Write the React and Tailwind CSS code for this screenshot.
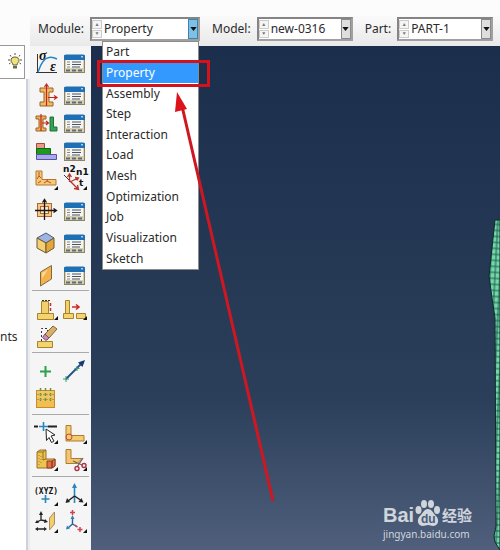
import React, { useState } from 'react';

const MODULES = [
    'Part',
    'Property',
    'Assembly',
    'Step',
    'Interaction',
    'Load',
    'Mesh',
    'Optimization',
    'Job',
    'Visualization',
    'Sketch',
];

/* ---------- Toolbox icons ---------- */

const Icon = ({ children, more }) => (
    <svg viewBox="0 0 28 28" className="w-7 h-7 overflow-visible" fill="none" aria-hidden="true">
        {children}
        {more && <path d="M26 20v4h-4z" fill="#111" />}
    </svg>
);

const ManagerIcon = () => (
    <Icon>
        <rect x="3.5" y="5.5" width="20" height="17" fill="#d9cfae" stroke="#8c8468" />
        <path d="M3 10V6.500Q3 4.500 5 4.500H22Q24 4.500 24 6.500V10z" fill="#1f6fb5" />
        <rect x="20" y="6" width="2" height="1.500" fill="#9fd0f2" />
        <rect x="5" y="10" width="17" height="8" fill="#f4f5f5" />
        <path d="M6 12h3M6 14.500h3M6 17h3" stroke="#888" />
        <path d="M11 12h9M11 14.500h9M11 17h8" stroke="#4d5460" />
        <path d="M5 19.500h4v2H5zM11 19.500h4v2h-4zM17 19.500h4v2h-4z" fill="#5d6a7c" />
    </Icon>
);

const MaterialIcon = () => (
    <Icon>
        <path d="M5.500 4v19M4 22.500h21" stroke="#333" />
        <path d="M6 22C9 13 12 8 17 7.500 20 7 22 7.500 25 9" stroke="#2387c2" strokeWidth="1.500" />
        <text x="7" y="10" fill="#111" fontSize="14" fontStyle="italic" fontWeight="bold" fontFamily="Liberation Serif, serif">σ</text>
        <text x="18" y="21" fill="#111" fontSize="14" fontStyle="italic" fontWeight="bold" fontFamily="Liberation Serif, serif">ε</text>
    </Icon>
);

const SectionIcon = () => (
    <Icon>
        <path d="M8 6h13v4h-4v10h4v4H8v-4h4V10H8z" fill="#f0b968" stroke="#9a6425" />
        <path d="M14.500 24V3M12.500 5l2-3 2 3M16 15.500h8M22 13.500l3 2-3 2" stroke="#c8231c" strokeWidth="1.200" />
    </Icon>
);

const AssignIcon = () => (
    <Icon>
        <path d="M4 6h10v3h-3v9h3v3H4v-3h3V9H4z" fill="#eeb05c" stroke="#9a6425" />
        <path d="M9 4v17M10 13h6M14 11l2.500 2-2.500 2" stroke="#c8231c" strokeWidth="1.200" />
        <path d="M18 7h3.500v10H25v4h-7z" fill="#35a152" stroke="#1f7438" />
    </Icon>
);

const LayupIcon = () => (
    <Icon>
        <path d="M4.500 5.500h8v5h-8z" fill="#e89b8b" stroke="#a04a3a" />
        <path d="M4.500 10.500h14v6h-14z" fill="#1d9a1d" stroke="#11680f" />
        <path d="M4.500 16.500h20v5h-20z" fill="#a9a8e8" stroke="#5654a8" />
    </Icon>
);

const OrientationIcon = () => (
    <Icon more>
        <path d="M4 5h6v8.500h14V19H4z" fill="#f5c977" stroke="#ae7a2c" />
        <path d="M7 6v4l-2 3M7 10l2 2M12 17l3-2 4 2M15 15l1-2M6 17l3-2" stroke="#c64a24" />
    </Icon>
);

const NormalsIcon = () => (
    <Icon more>
        <g fill="#111" fontSize="9" fontWeight="bold" fontFamily="DejaVu Sans, sans-serif">
            <text x="2" y="6">n2</text>
            <text x="15" y="9">n1</text>
            <text x="18" y="20">t</text>
        </g>
        <path d="M3 9l7 7" stroke="#333" />
        <path d="M8.500 16V9M6.500 11l2-3 2 3M9 16l8-4M14 11.500l3.500.500-1.500 2.500M9 15l8 8M16.500 19l1 4.500-4.500-1" stroke="#b8342c" strokeWidth="1.300" />
    </Icon>
);

const FrameIcon = () => (
    <Icon>
        <rect x="5.500" y="5.500" width="14" height="13" fill="#f5c98d" stroke="#b0672c" />
        <rect x="8.500" y="8.500" width="8" height="7" fill="#f9ead2" stroke="#b0672c" />
        <path d="M12.500 22V2M10.500 4.500l2-3 2 3M3 12.500h21M21.500 10.500l3 2-3 2" stroke="#181818" strokeWidth="1.300" />
    </Icon>
);

const SkinIcon = () => (
    <Icon>
        <path d="M5 8l9-5 8 5-8 5z" fill="#9db5e2" stroke="#4d5a78" />
        <path d="M5 8l9 5v10l-9-5z" fill="#f6cf73" stroke="#6d5a30" />
        <path d="M22 8l-8 5v10l8-5z" fill="#e2a63c" stroke="#6d5a30" />
    </Icon>
);

const ShellIcon = () => (
    <Icon>
        <path d="M8.500 10l11-6.500V17l-11 7z" fill="#f3b24a" stroke="#7c6a48" />
        <path d="M10 11l6-3.500-6 9z" fill="#fbd999" />
    </Icon>
);

const StringerIcon = () => (
    <Icon more>
        <path d="M9.500 5.500h7v12h-7z" fill="#f3cf6b" stroke="#a98328" />
        <path d="M5.500 17.500h16v6h-16z" fill="#f5d46f" stroke="#a98328" />
        <path d="M10 4.500h9" stroke="#333" strokeDasharray="2 1" />
        <path d="M18.500 7v9" stroke="#cb2d24" strokeWidth="1.500" strokeDasharray="3 2" />
    </Icon>
);

const OffsetIcon = () => (
    <Icon more>
        <path d="M4.500 4.500h4v13h-4z" fill="#f3cf6b" stroke="#a98328" />
        <path d="M2.500 17.500h10v5h-10zM15.500 17.500h9v5h-9z" fill="#f5d46f" stroke="#a98328" />
        <path d="M11 11h6M15 8.500l3 2.500-3 2.500" stroke="#cb2d24" strokeWidth="1.600" />
    </Icon>
);

const EraseIcon = () => (
    <Icon>
        <path d="M5.500 18.500h15v6h-15z" fill="#f5d46f" stroke="#a98328" />
        <path d="M9.500 18V5.500h6V17" stroke="#333" strokeDasharray="2 2" />
        <path d="M13 11l8-8 4 3-8 9z" fill="#d8b069" stroke="#7f6537" />
        <path d="M13 11l4 4-3 2.500-3.500-3z" fill="#c98bb3" stroke="#7b4f74" />
    </Icon>
);

const PointIcon = () => (
    <Icon>
        <path d="M13.500 8v11M8 13.500h11" stroke="#2aa14a" strokeWidth="2" />
    </Icon>
);

const AxisIcon = () => (
    <Icon>
        <path d="M5 21L22 4" stroke="#214f86" strokeWidth="1.800" />
        <path d="M24 2l-2.500 7-4.500-4.500z" fill="#173c74" />
        <path d="M5 18v6M2 21h6M16 8v5M13.500 10.500h5" stroke="#3b9a6f" />
    </Icon>
);

const GridIcon = () => (
    <Icon>
        <rect x="4.500" y="5.500" width="18" height="17" fill="#f3bd4f" stroke="#c28d2c" />
        <path d="M5 6h17v10H5z" fill="#efc766" />
        <path d="M8.500 3v14M13.500 3v14M18.500 3v14" stroke="#6c9138" strokeWidth="1.500" strokeDasharray="3 2" />
        <path d="M5 9.500h17M5 14.500h17" stroke="#b49a40" strokeDasharray="2 1" />
    </Icon>
);

const PartitionEdgeIcon = () => (
    <Icon more>
        <path d="M2 6.500h4M16 6.500h9" stroke="#222" strokeWidth="1.800" />
        <path d="M11.500 2v9M7 6.500h9" stroke="#2786bd" strokeWidth="1.600" />
        <path d="M14 9l9 6-4 1 3 5-2.500 1.500-2.500-5-2.500 3z" fill="#fff" stroke="#222" />
    </Icon>
);

const PartitionFaceIcon = () => (
    <Icon more>
        <path d="M5 5.500h5v10h13v5.500H5z" fill="#f5cc72" stroke="#b07c2c" />
        <circle cx="8" cy="17" r="3" stroke="#c5492a" />
    </Icon>
);

const PartitionCellIcon = () => (
    <Icon more>
        <path d="M5 5l3-2h6v9h9v7l-3 2H5z" fill="#eec34f" stroke="#947027" />
        <path d="M5 5h6l3-2M11 5v8M11 13l3-1" stroke="#947027" />
        <path d="M15 14h5v7h-5zM20 14l3-2v7l-3 2z" fill="#dd7548" stroke="#983920" />
        <path d="M7 8v10M9 9v9" stroke="#a88129" strokeDasharray="1 2" />
    </Icon>
);

const CutIcon = () => (
    <Icon more>
        <path d="M5 2.500h5v9h11l-5 5H5z" fill="#f3c570" stroke="#b07c2c" />
        <path d="M12 14l9 4M22 11l-6 9" stroke="#666" strokeWidth="1.300" />
        <circle cx="23" cy="18.500" r="2" stroke="#b52f3e" strokeWidth="1.400" />
        <circle cx="16" cy="21.500" r="2" stroke="#b52f3e" strokeWidth="1.400" />
    </Icon>
);

const DatumPointIcon = () => (
    <Icon more>
        <text x="2" y="12" fill="#111" fontSize="8" fontWeight="bold" fontFamily="DejaVu Sans Mono, monospace">(XYZ)</text>
        <path d="M13.500 13v8M9.500 17h8" stroke="#2786bd" strokeWidth="1.600" />
    </Icon>
);

const TriadIcon = () => (
    <Icon more>
        <path d="M13.500 21V3" stroke="#2786bd" strokeWidth="1.600" />
        <path d="M13.500 1l2.500 5h-5z" fill="#2786bd" />
        <path d="M13.500 14L7 19M13.500 14l6 4" stroke="#222" strokeWidth="1.500" />
        <path d="M4.500 21l1.500-5 3 4zM22.500 20.500l-5-.500 3-4z" fill="#222" />
    </Icon>
);

const DatumPlaneIcon = () => (
    <Icon more>
        <path d="M9 11V5M9 11l-4 2M9 11l5 1M5 20h8" stroke="#222" strokeWidth="1.300" />
        <path d="M9 2l2 4H7zM3 14l2-3 2 3zM16 13l-4 1 1-4zM3 20l3-2v4zM15 20l-3-2v4z" fill="#222" />
        <path d="M17.500 9l5-6v12l-5 6z" fill="#f5cc72" stroke="#a98f5c" />
    </Icon>
);

const CsysIcon = () => (
    <Icon more>
        <path d="M11.500 15V9M11.500 15L7 19M11.500 15l5 3" stroke="#2d5f9a" strokeWidth="1.400" />
        <path d="M11.500 6l2 4h-4zM5 20.500l1-4 3 3z" fill="#2786bd" />
        <path d="M11.500 1v5M9 3.500h5M19 18v5M16.500 20.500h5M14 16l2 2" stroke="#d4424e" strokeWidth="1.500" />
    </Icon>
);

const BulbIcon = () => (
    <svg viewBox="0 0 16 18" className="w-4 h-[18px]" fill="none" aria-hidden="true">
        <path d="M8 4c3 0 4 2 4 3.500S10 10 10 12H6c0-2-2-2.500-2-4.500S5 4 8 4z" fill="#efe27a" stroke="#5e5b33" />
        <path d="M6 13h4v2.500H6z" fill="#6b6b55" />
        <path d="M8 0v2M3 2l1 1.500M13 2l-1 1.500M1 7h2M13 7h2M2 11l1.500-1M14 11l-1.500-1" stroke="#55513a" />
    </svg>
);

const CREATE_TOOLS = [
    [['Create Material', MaterialIcon], ['Material Manager', ManagerIcon]],
    [
        ['Create Section', SectionIcon], ['Section Manager', ManagerIcon],
        ['Assign Section', AssignIcon], ['Section Assignment Manager', ManagerIcon],
        ['Create Composite Layup', LayupIcon], ['Composite Layup Manager', ManagerIcon],
        ['Assign Material Orientation', OrientationIcon], ['Assign Normals', NormalsIcon],
    ],
    [['Create Profile', FrameIcon], ['Profile Manager', ManagerIcon]],
    [['Create Skin', SkinIcon], ['Skin Manager', ManagerIcon]],
    [['Create Shell', ShellIcon], ['Shell Manager', ManagerIcon]],
];

const EDIT_TOOLS = [
    [['Create Stringer', StringerIcon], ['Offset', OffsetIcon], ['Remove', EraseIcon]],
    [['Create Point', PointIcon], ['Create Axis', AxisIcon], ['Create Grid', GridIcon]],
    [
        ['Partition Edge', PartitionEdgeIcon], ['Partition Face', PartitionFaceIcon],
        ['Partition Cell', PartitionCellIcon], ['Cut', CutIcon],
    ],
    [
        ['Datum Point', DatumPointIcon], ['Datum Axis', TriadIcon],
        ['Datum Plane', DatumPlaneIcon], ['Datum CSYS', CsysIcon],
    ],
];

const ToolButton = ({ label, icon: Glyph, className }) => (
    <button type="button" title={label} aria-label={label} className={`w-7 hover:bg-blue-100 ${className}`}>
        <Glyph />
    </button>
);

const Toolbox = () => (
    <div className="shrink-0 w-[61px] px-0.5 pt-1 bg-[#f5f5f6]">
        <div className="flex flex-col gap-1">
            {CREATE_TOOLS.map((group, i) => (
                <div key={i} className="grid grid-cols-2">
                    {group.map(([label, icon]) => (
                        <ToolButton key={label} label={label} icon={icon} className="h-7" />
                    ))}
                </div>
            ))}
        </div>
        {EDIT_TOOLS.map((group, i) => (
            <div key={i} className="grid grid-cols-2 border-t border-[#a9a9ab] pt-[5px] pb-0.5">
                {group.map(([label, icon]) => (
                    <ToolButton key={label} label={label} icon={icon} className="h-[27px]" />
                ))}
            </div>
        ))}
    </div>
);

/* ---------- Context bar ---------- */

const Combo = ({ id, label, options, value, onChange, onOpen, active, width, children }) => (
    <div className="flex items-center">
        <label htmlFor={id} className="pr-1.5">{label}:</label>
        <div className={`relative flex h-6 bg-white border-2 border-[#858585] border-r-[#a0a0a0] border-b-[#a0a0a0] ${width}`}>
            <div className="flex flex-col w-2.5 py-px gap-px text-[5px] leading-none text-[#777]">
                <button type="button" aria-label={`Previous ${label}`} className="flex-1 border border-[#ccc] bg-[#f5f5f5]">▲</button>
                <button type="button" aria-label={`Next ${label}`} className="flex-1 border border-[#ccc] bg-[#f5f5f5]">▼</button>
            </div>
            <select
                id={id}
                value={value}
                onChange={onChange}
                onMouseDown={onOpen}
                className="flex-1 min-w-0 appearance-none bg-transparent pl-0.5 outline-none"
            >
                {options.map((option) => (
                    <option key={option}>{option}</option>
                ))}
            </select>
            <span
                className={`pointer-events-none flex items-center justify-center w-2.5 border ${
                    active ? 'bg-[#7fc0e6] border-[#3b83b0]' : 'bg-[#dedede] border-[#8a8a8a]'
                }`}
            >
                <svg viewBox="0 0 8 5" className="shrink-0 w-[7px] h-1" aria-hidden="true">
                    <path d="M0 0h8L4 5z" fill="#111" />
                </svg>
            </span>
            {children}
        </div>
    </div>
);

const ModuleList = ({ value, onPick }) => (
    <ul
        role="listbox"
        aria-label="Module"
        className="absolute z-10 left-2.5 top-[22px] grid auto-rows-fr w-[97px] h-[229px] bg-white border border-[#8b8b8b]"
    >
        {MODULES.map((name) => (
            <li
                key={name}
                role="option"
                aria-selected={name === value}
                onClick={() => onPick(name)}
                className={`flex items-center pl-[3px] ${name === value ? 'bg-[#3399ff] text-white' : ''}`}
            >
                {name}
            </li>
        ))}
    </ul>
);

/* ---------- Viewport ---------- */

const MeshPart = () => (
    <svg viewBox="0 0 12 332" className="absolute right-0 top-[172px] w-3 h-[332px]" aria-hidden="true">
        <defs>
            <pattern id="mesh" width="5" height="6" patternUnits="userSpaceOnUse" patternTransform="rotate(3)">
                <rect width="5" height="6" fill="#1b5c48" />
                <rect x="0.500" y="0.500" width="4" height="5" fill="#74d6ab" />
            </pattern>
        </defs>
        <path d="M7 2h5v330l-5-8-1-6 2-10-1-208-3-20-3-22z" fill="url(#mesh)" stroke="#0b2c28" />
    </svg>
);

const Watermark = () => (
    <div className="absolute right-[28px] bottom-[9px] w-[89px] text-white/75">
        <div className="flex items-end justify-between h-7">
            <span className="font-['Liberation_Sans',sans-serif] font-bold text-[20px] leading-6">Bai</span>
            <svg viewBox="0 0 26 28" className="w-[26px] h-7" fill="currentColor" aria-hidden="true">
                <ellipse cx="3.500" cy="11" rx="3" ry="4" />
                <ellipse cx="9" cy="5" rx="3" ry="4" />
                <ellipse cx="16" cy="5" rx="3" ry="4" />
                <ellipse cx="22" cy="11" rx="3" ry="4" />
                <path d="M13 10c4 0 5 4 8 7 4 4 2 10-3 10-2 0-3-1-5-1s-3 1-5 1c-5 0-7-6-3-10 3-3 4-7 8-7z" />
                <text x="6" y="24" fontSize="12" fontWeight="bold" fill="#4a5b78" fontFamily="Liberation Sans, sans-serif">du</text>
            </svg>
            <span className="font-['Noto_Sans_CJK_SC',sans-serif] font-bold text-[15px] leading-6">经验</span>
        </div>
        <div className="font-['Noto_Sans',sans-serif] text-[10px] leading-[14px]">jingyan.baidu.com</div>
    </div>
);

const Annotation = () => (
    <>
        <div className="absolute z-20 pointer-events-none left-[67px] top-[60px] w-[113px] h-[27px] border-[3px] border-[#d3121c]" />
        <svg viewBox="0 0 110 412" className="absolute z-20 pointer-events-none left-[140px] top-[92px] w-[110px] h-[412px]" aria-hidden="true">
            <path d="M12 14L103 409" stroke="#cf1722" strokeWidth="3" />
            <path d="M7 0l10 17-12 3z" fill="#dd131c" />
        </svg>
    </>
);

export default function App() {
    const [module, setModule] = useState('Property');
    const [open, setOpen] = useState(true);

    const pickModule = (name) => {
        setModule(name);
        setOpen(false);
    };

    return (
        <div className="flex min-h-screen overflow-hidden bg-[#fcfcfc] font-['Noto_Sans',sans-serif] text-xs leading-5 text-[#2b2b2b]">
            {/* Model tree edge */}
            <aside className="flex flex-col shrink-0 w-[30px] pt-[45px]">
                <div className="flex items-center justify-end w-[25px] h-[34px] pr-px bg-white border border-l-0 border-[#999]">
                    <BulbIcon />
                </div>
                <div className="flex flex-1 pr-0.5 bg-[#e9ebef]">
                    <div className="flex-1 pt-[248px] bg-white border-r-2 border-[#cdd3db]">nts</div>
                </div>
            </aside>

            <main className="relative flex flex-col flex-1 min-w-0 pt-4">
                <header className="flex items-center shrink-0 h-[30px] pl-2 pb-1 gap-3 whitespace-nowrap bg-linear-to-b from-[#fafafa] to-[#e9e9e9]">
                    <Combo
                        id="module"
                        label="Module"
                        options={MODULES}
                        value={module}
                        active={open}
                        width="w-[110px]"
                        onChange={(e) => pickModule(e.target.value)}
                        onOpen={(e) => {
                            e.preventDefault();
                            setOpen(!open);
                        }}
                    >
                        {open && <ModuleList value={module} onPick={pickModule} />}
                    </Combo>
                    <Combo id="model" label="Model" options={['new-0316']} width="w-24" />
                    <Combo id="part" label="Part" options={['PART-1']} width="w-24" />
                </header>

                <div className="flex flex-1">
                    <Toolbox />
                    <section className="relative flex-1 overflow-hidden bg-linear-to-b from-[#1b2e4c] via-[#2b3f5a] via-70% to-[#4f5f7c]">
                        <MeshPart />
                        <Watermark />
                    </section>
                </div>

                <Annotation />
            </main>
        </div>
    );
}
